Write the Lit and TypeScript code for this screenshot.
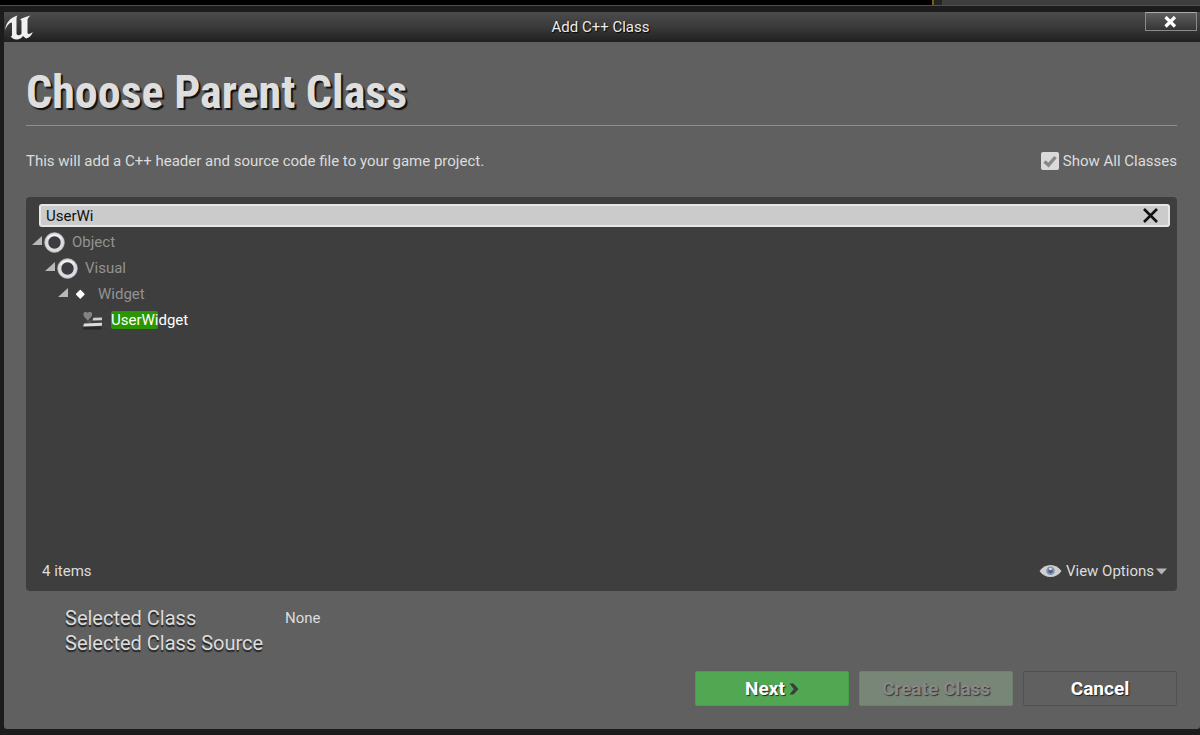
import { LitElement, html, css, svg } from "lit";
import { customElement, property, state } from "lit/decorators.js";

type IconKind = "ring" | "dot" | "widget";

interface ClassNode {
  name: string;
  icon: IconKind;
  depth: number;
  leaf?: boolean;
}

const CLASSES: ClassNode[] = [
  { name: "Object", icon: "ring", depth: 0 },
  { name: "Visual", icon: "ring", depth: 1 },
  { name: "Widget", icon: "dot", depth: 2 },
  { name: "UserWidget", icon: "widget", depth: 3, leaf: true },
];

const ICONS = {
  ring: svg`
    <circle cx="10.5" cy="10.5" r="8.1" fill="#3a3c40" stroke="#dcdce0" stroke-width="3.8"/>
    <circle cx="10.5" cy="10.5" r="9.9" fill="none" stroke="#a6a6aa" stroke-width="0.6"/>
    <path d="M4 6.500A7.700 7.700 0 0 1 17 6.500" fill="none" stroke="#f2f2f5" stroke-width="1.600"/>`,
  dot: svg`<path d="M10.3 6.6 L14 10.3 L10.3 14 L6.6 10.3 Z" fill="#fff" stroke="#fff" stroke-width="1.4" stroke-linejoin="round"/>`,
  widget: svg`
    <path d="M0 17.2h18.500v2.300H0z" fill="#262626"/>
    <path d="M4.7 10.8 L1 6.400 C-0.400 4.200 0.800 1.800 2.700 1.800 C3.900 1.800 4.500 2.600 4.700 3.200 C5 2.600 5.700 1.800 6.900 1.800 C8.800 1.800 10 4.200 8.500 6.400 Z" fill="#858283"/>
    <path d="M10.300 7.800l8.700-0.400v2.800l-9.500 0.200z" fill="#cfcfcf"/>
    <path d="M1 13.400l18-0.600v3l-18.800 0.600z" fill="#dadada"/>
    <path d="M4 10.400h5l-1 2.200H4.500z" fill="#555"/>`,
};

@customElement("class-row")
class ClassRow extends LitElement {
  @property({ attribute: false }) node!: ClassNode;
  @property() query = "";

  static styles = css`
    :host {
      display: flex;
      align-items: center;
      height: 26px;
      color: #929292;
    }
    .arrow {
      width: 10px;
      height: 12px;
      margin-right: 2px;
      flex: none;
    }
    .icon {
      width: 21px;
      height: 21px;
      margin-right: 7px;
      flex: none;
    }
    .match {
      color: #fff;
    }
    .match mark {
      background: #2b9600;
      color: #fff;
      border-radius: 2px;
    }
  `;

  render() {
    const { name, icon, leaf } = this.node;
    const hit = this.query && name.toLowerCase().startsWith(this.query.toLowerCase());
    const n = this.query.length;
    return html`
      <svg class="arrow" viewBox="0 0 10 12" aria-hidden="true">
        ${leaf ? "" : svg`<path d="M10 0v9H0z" fill="#b9b9b9"/>`}
      </svg>
      <svg class="icon" viewBox="0 0 21 21" aria-hidden="true">${ICONS[icon]}</svg>
      ${hit
        ? html`<span class="match"><mark>${name.slice(0, n)}</mark>${name.slice(n)}</span>`
        : html`<span>${name}</span>`}
    `;
  }
}

@customElement("app-root")
class AppRoot extends LitElement {
  @state() private query = "UserWi";

  static styles = css`
    :host {
      display: flex;
      flex-direction: column;
      min-height: 100vh;
      box-sizing: border-box;
      background: #1c1c1c;
      font: 15px/20px Roboto, sans-serif;
      color: #dcdcdc;
    }
    button,
    input {
      font: inherit;
    }
    .backdrop {
      display: flex;
      height: 5px;
      background: #000;
    }
    .backdrop .tab {
      width: 22.3%;
      margin-left: auto;
      box-sizing: border-box;
      background: linear-gradient(90deg, #242424 8px, #3e3e3e 8px);
      border-left: 2px solid #7a5a12;
    }
    .window {
      flex: 1;
      display: flex;
      flex-direction: column;
      border-top: 1px solid #505050;
      padding: 6px 0 6px 4px;
    }
    .titlebar {
      display: grid;
      grid-template-columns: 1fr auto 1fr;
      align-items: start;
      height: 30px;
      padding-right: 3px;
      background: linear-gradient(#4c4c4c, #3a3a3a 50%, #202020);
    }
    .logo {
      width: 30px;
      height: 30px;
    }
    .caption {
      margin: 0;
      font-size: 15px;
      font-weight: 400;
      line-height: 30px;
      color: #ececec;
      text-shadow: 1px 1px 1px #000;
    }
    .close {
      justify-self: end;
      display: grid;
      place-items: center;
      width: 52px;
      height: 19px;
      padding: 0;
      border: 1px solid #8a8a8a;
      border-top-color: #aaa;
      background: linear-gradient(#5e5e5e, #353535);
    }
    .content {
      flex: 1;
      display: flex;
      flex-direction: column;
      padding: 20px 23px 23px 22px;
      background: #606060;
      border-radius: 0 0 3px 3px;
    }
    .title {
      margin: 0;
      padding-bottom: 3px;
      font: 700 46px/60px "Roboto Condensed", "Liberation Sans Narrow", Roboto, sans-serif;
      color: #dedede;
      text-shadow: 2px 2px 1px #111;
      border-bottom: 1px solid #8e8e8e;
    }
    .intro {
      display: flex;
      justify-content: space-between;
      align-items: center;
      margin: 25px 0 26px;
    }
    .intro p {
      margin: 0;
    }
    .check {
      display: flex;
      align-items: center;
      gap: 4px;
    }
    .check input {
      appearance: none;
      width: 18px;
      height: 18px;
      margin: 0;
      border-radius: 2px;
      background: #dadada
        url("data:image/svg+xml,%3Csvg xmlns='http://www.w3.org/2000/svg' viewBox='0 0 18 18'%3E%3Cpath d='M3.5 9.500l4 3.500L14.500 5' fill='none' stroke='%23888' stroke-width='3.400'/%3E%3C/svg%3E");
    }
    .panel {
      flex: 1;
      display: flex;
      flex-direction: column;
      padding: 7px 7px 10px 6px;
      border-radius: 4px;
      background: #3e3e3e;
    }
    .search {
      display: flex;
      align-items: center;
      height: 23px;
      margin-left: 7px;
      box-sizing: border-box;
      border: 2px solid #e6e6e6;
      border-radius: 3px;
      background: #cbcbcb;
    }
    .search input {
      flex: 1;
      min-width: 0;
      padding: 0 5px;
      border: 0;
      outline: 0;
      background: none;
      color: #111;
    }
    .clear {
      display: grid;
      padding: 0;
      margin-right: 9px;
      border: 0;
      background: none;
    }
    .tree {
      flex: 1;
      margin: 2px 0 0;
      padding: 0;
      list-style: none;
    }
    .tree li {
      padding-left: calc(var(--depth) * 13px);
    }
    .status {
      display: flex;
      justify-content: space-between;
      align-items: center;
      padding: 0 3px 0 10px;
    }
    .options {
      display: flex;
      align-items: center;
      padding: 0;
      border: 0;
      background: none;
      color: inherit;
    }
    .options .eye {
      margin-right: 4px;
    }
    .options .caret {
      margin-left: 2px;
    }
    .details {
      display: grid;
      grid-template-columns: 220px 1fr;
      align-items: center;
      margin: 15px 0 15px 39px;
      line-height: 25px;
    }
    .details dt {
      grid-column: 1;
      font-size: 20px;
      white-space: nowrap;
      text-shadow: 0 2px 1px #222;
    }
    .details dd {
      margin: 0;
    }
    .actions {
      display: flex;
      justify-content: flex-end;
      gap: 10px;
    }
    .actions button {
      display: flex;
      justify-content: center;
      align-items: center;
      gap: 4px;
      width: 154px;
      height: 35px;
      padding: 0;
      border: 1px solid #505050;
      border-radius: 2px;
      background: #606060;
      font-size: 19px;
      font-weight: 700;
      color: #fff;
      text-shadow: 1px 1px 1px #222;
    }
    .actions .next {
      background: #52a852;
      border-color: #46a046;
    }
    .actions .create {
      background: #788678;
      border-color: #6c826c;
      color: #888;
      text-shadow: 1px 1px 1px #333;
    }
  `;

  private onInput(e: Event) {
    this.query = (e.target as HTMLInputElement).value;
  }

  render() {
    return html`
      <div class="backdrop"><div class="tab"></div></div>
      <div class="window" role="dialog" aria-labelledby="caption">
        <header class="titlebar">
          <svg class="logo" viewBox="0 0 30 30" aria-hidden="true">
            <path
              fill="#f2f2f2"
              d="M1 18C2 11 6 5.500 13.500 3.500C12.500 5 12.500 6 12.500 8V20.500C12.500 22.500 13 23.200 14.500 23.200C16 23.200 17 22.500 17.500 21.500V9.500C17.500 8 17 7.500 15.500 8C18 5.500 22 5 26.500 3.500C24.500 5.500 23.500 6.500 23.500 8V20.500C23.500 22.500 25.500 22.500 28.800 20C27.500 23.500 25 26 22 26.500L19 24C17.500 26 15.500 27.500 12.500 27.500C10 27.500 8.500 26.500 6.500 24.500C7.700 24.500 8 24 8 22.500V12C8 10.500 7.500 10 6 11C4 12.500 2.500 14.500 1 18Z"
            />
          </svg>
          <h2 class="caption" id="caption">Add C++ Class</h2>
          <button class="close" aria-label="Close">
            <svg width="14" height="12" viewBox="0 0 14 12">
              <path d="M1.500 1L11 10.500M11 1L1.500 10.500" stroke="#fff" stroke-width="3.200" />
            </svg>
          </button>
        </header>
        <main class="content">
          <h1 class="title">Choose Parent Class</h1>
          <div class="intro">
            <p>This will add a C++ header and source code file to your game project.</p>
            <label class="check"><input type="checkbox" checked />Show All Classes</label>
          </div>
          <section class="panel">
            <div class="search">
              <input type="text" aria-label="Search classes" .value=${this.query} @input=${this.onInput} />
              <button class="clear" aria-label="Clear search" @click=${() => (this.query = "")}>
                <svg width="16" height="16" viewBox="0 0 16 16">
                  <path d="M1 1L14 14M14 1L1 14" stroke="#111" stroke-width="2.600" />
                </svg>
              </button>
            </div>
            <ul class="tree">
              ${CLASSES.map(
                (c) => html`<li style="--depth:${c.depth}">
                  <class-row .node=${c} .query=${this.query}></class-row>
                </li>`
              )}
            </ul>
            <div class="status">
              <span>${CLASSES.length} items</span>
              <button class="options">
                <svg class="eye" width="23" height="14" viewBox="0 0 23 14" aria-hidden="true">
                  <path d="M0.500 7C6 -1 17 -1 22.500 7C17 15 6 15 0.500 7Z" fill="#d0d0d0" />
                  <circle cx="11.500" cy="6.800" r="4.300" fill="#8193b3" />
                  <circle cx="11.500" cy="7" r="2.200" fill="#50617f" />
                  <circle cx="11.500" cy="5" r="1.300" fill="#dfe6f2" />
                </svg>
                View Options
                <svg class="caret" width="11" height="7" viewBox="0 0 11 7" aria-hidden="true">
                  <path d="M0 0.500h11L5.500 6.500z" fill="#b5b5b5" />
                </svg>
              </button>
            </div>
          </section>
          <dl class="details">
            <dt>Selected Class</dt>
            <dd>None</dd>
            <dt>Selected Class Source</dt>
          </dl>
          <div class="actions">
            <button class="next">
              Next
              <svg width="10" height="12" viewBox="0 0 10 12" aria-hidden="true">
                <path d="M0.500 0.500H4.500L9.500 6L4.500 11.500H0.500L4.800 6Z" fill="#3a3f3a" />
              </svg>
            </button>
            <button class="create" disabled>Create Class</button>
            <button>Cancel</button>
          </div>
        </main>
      </div>
    `;
  }
}
